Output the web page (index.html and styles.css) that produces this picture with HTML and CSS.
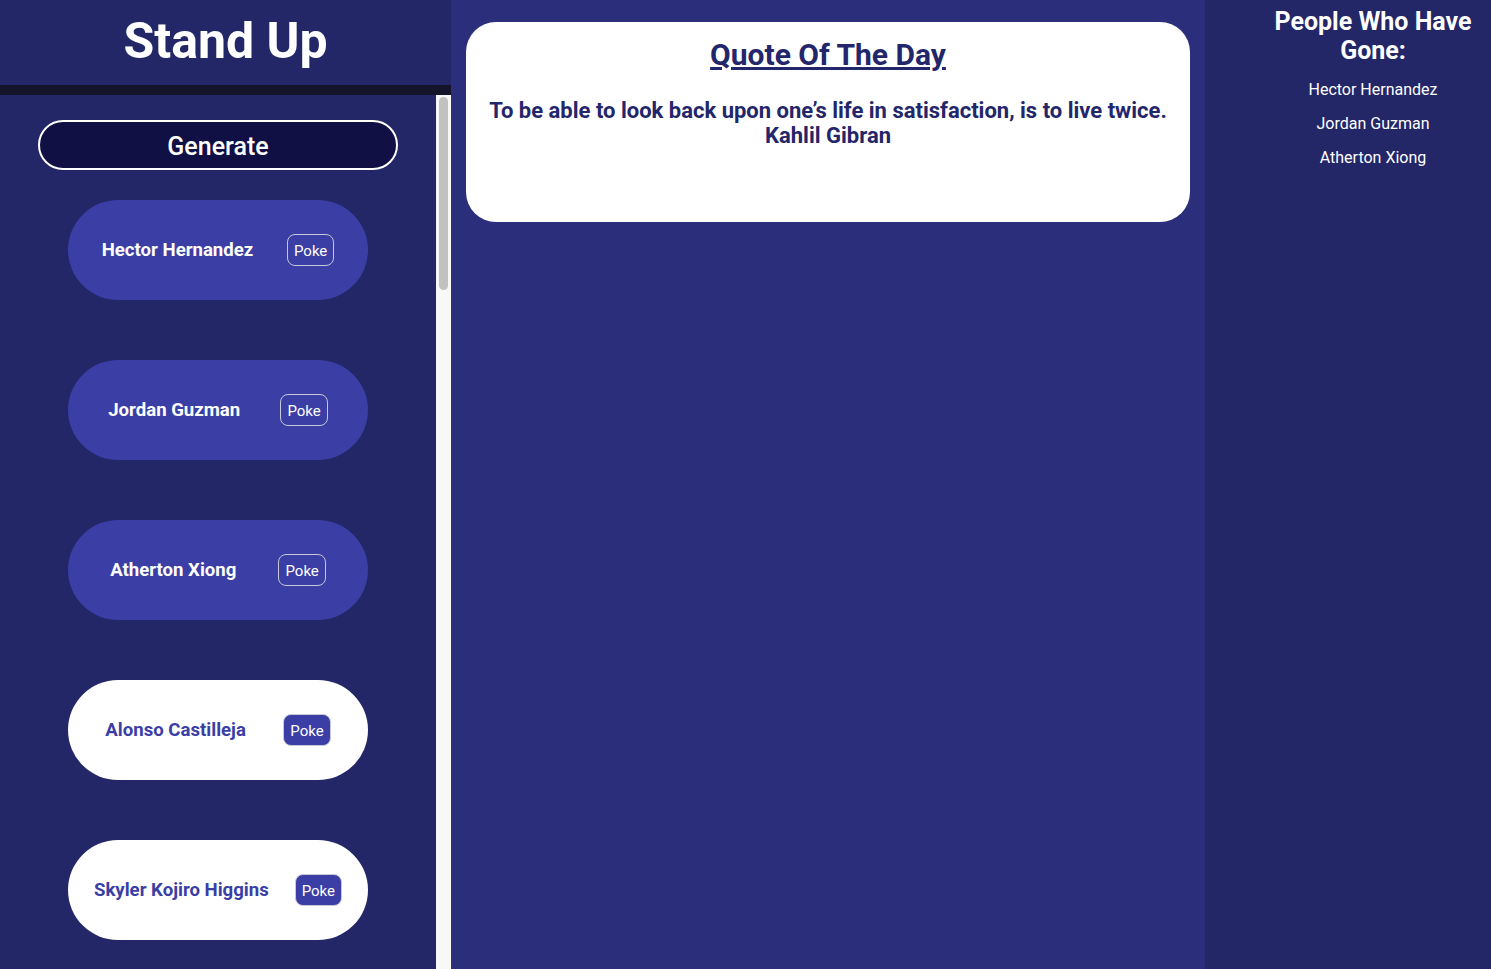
FILE: index.html
```html
<!DOCTYPE html>
<html>
<head>
<meta charset="utf-8">
<title>Stand Up</title>
<link rel="stylesheet" href="styles.css">
</head>
<body>
<div class="app">
  <aside class="left">
    <header class="brand"><h1>Stand Up</h1></header>
    <div class="divider"></div>
    <div class="roster-wrap">
      <div class="roster">
        <button class="generate">Generate</button>
        <div class="card gone"><span class="name">Hector Hernandez</span><button class="poke">Poke</button></div>
        <div class="card gone"><span class="name">Jordan Guzman</span><button class="poke">Poke</button></div>
        <div class="card gone"><span class="name">Atherton Xiong</span><button class="poke">Poke</button></div>
        <div class="card"><span class="name">Alonso Castilleja</span><button class="poke">Poke</button></div>
        <div class="card"><span class="name">Skyler Kojiro Higgins</span><button class="poke">Poke</button></div>
      </div>
      <div class="scrollbar"><div class="thumb"></div></div>
    </div>
  </aside>
  <main class="middle">
    <section class="quote">
      <h2 class="quote-title">Quote Of The Day</h2>
      <p class="quote-text">To be able to look back upon one’s life in satisfaction, is to live twice.<br>Kahlil Gibran</p>
    </section>
  </main>
  <aside class="right">
    <h3 class="gone-title">People Who Have Gone:</h3>
    <ul class="gone-list">
      <li>Hector Hernandez</li>
      <li>Jordan Guzman</li>
      <li>Atherton Xiong</li>
    </ul>
  </aside>
</div>
</body>
</html>
```
FILE: styles.css
```css
* { box-sizing: border-box; }
html, body { margin: 0; padding: 0; height: 100%; }
body {
  font-family: Roboto, "Noto Sans", sans-serif;
  background: #2b2e7a;
  overflow: hidden;
}
.app {
  display: flex;
  height: 100vh;
}
.left {
  width: 451px;
  flex: none;
  display: flex;
  flex-direction: column;
  background: #232667;
  min-height: 0;
}
.brand {
  height: 85px;
  flex: none;
  display: flex;
  justify-content: center;
  align-items: center;
}
.brand h1 {
  margin: 0;
  padding-bottom: 4px;
  color: #fff;
  font-size: 50px;
  font-weight: 700;
}
.divider {
  height: 10px;
  flex: none;
  background: #14142a;
}
.roster-wrap {
  flex: 1;
  min-height: 0;
  display: flex;
}
.roster {
  flex: 1;
  min-width: 0;
  overflow: hidden;
  display: flex;
  flex-direction: column;
  align-items: center;
  padding-top: 25px;
}
.scrollbar {
  width: 15px;
  flex: none;
  background: #f8f8f8;
  padding: 2px 3px;
}
.thumb {
  height: 193px;
  border-radius: 5px;
  background: #c1c1c1;
}
.generate {
  width: 360px;
  height: 50px;
  flex: none;
  border: 2px solid #fff;
  border-radius: 25px;
  background: #101045;
  color: #fff;
  font-family: Roboto, sans-serif;
  font-size: 25px;
  font-weight: 500;
  padding: 3px 0 0;
  margin-bottom: 30px;
}
.card {
  width: 300px;
  height: 100px;
  flex: none;
  border-radius: 50px;
  background: #fff;
  display: flex;
  align-items: center;
  justify-content: space-evenly;
  margin-bottom: 60px;
}
.card .name {
  font-size: 18.6px;
  font-weight: 700;
  color: #3a3ea5;
}
.poke {
  height: 32px;
  padding: 1px 6px 0;
  border: 1px solid #c8c8d8;
  border-radius: 8px;
  background: #3a3ea5;
  color: #fff;
  font-family: Roboto, sans-serif;
  font-size: 15px;
}
.card.gone { background: #3a3ea5; }
.card.gone .name { color: #fff; }
.middle {
  width: 754px;
  flex: none;
  padding: 22px 15px;
  background: #2b2e7a;
}
.quote {
  height: 200px;
  background: #fff;
  border-radius: 30px;
  text-align: center;
  color: #23266a;
  padding-top: 15px;
}
.quote-title {
  margin: 0;
  font-size: 30px;
  font-weight: 700;
  text-decoration: underline;
  line-height: 36px;
}
.quote-text {
  margin: 25px 0 0;
  font-size: 22px;
  font-weight: 700;
  line-height: 25px;
}
.right {
  flex: 1;
  background: #232667;
  padding-left: 50px;
  text-align: center;
  color: #fff;
}
.gone-title {
  margin: 7px 0 0;
  font-size: 25px;
  font-weight: 700;
  line-height: 29px;
}
.gone-list {
  list-style: none;
  margin: 15px 0 0;
  padding: 0;
}
.gone-list li {
  font-size: 16px;
  line-height: 19px;
  margin-bottom: 15px;
}
```
